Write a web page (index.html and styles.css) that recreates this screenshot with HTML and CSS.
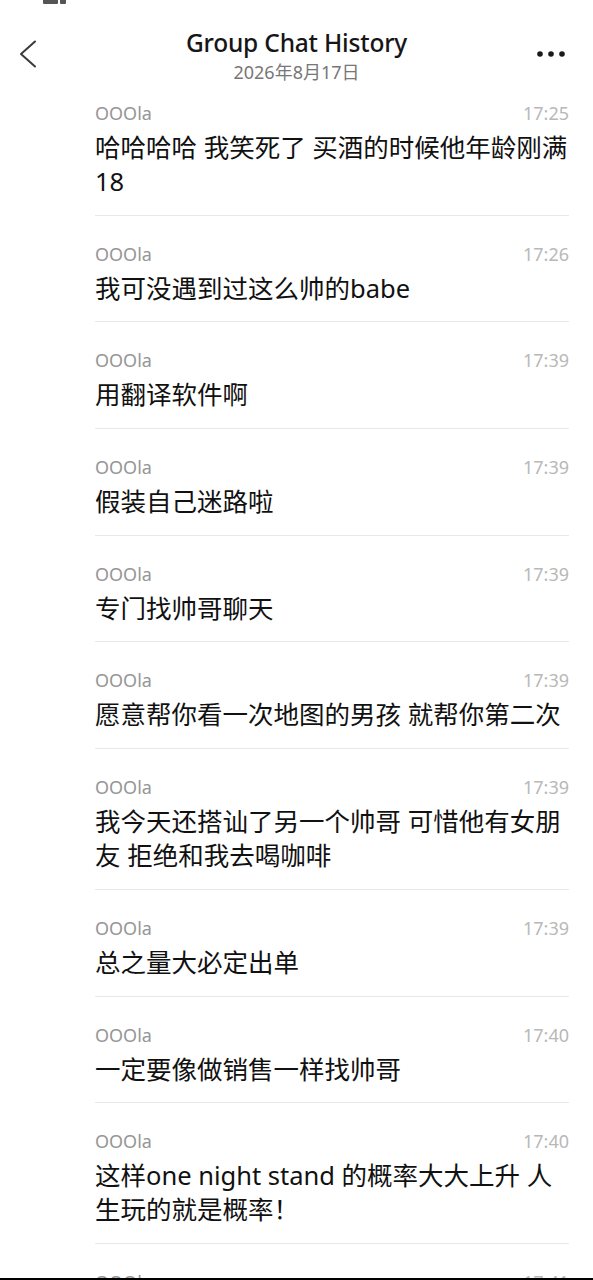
FILE: index.html
```html
<!DOCTYPE html>
<html lang="zh-CN">
<head>
    <meta charset="UTF-8">
    <meta name="viewport" content="width=device-width, initial-scale=1.0">
    <title>Group Chat History</title>
    <link rel="stylesheet" href="styles.css">
</head>
<body>
    <div class="status-icon"><span></span><span></span></div>

    <div class="header">
        <div class="back-btn">
            <svg width="18" height="28" viewBox="0 0 18 28">
                <polyline points="16,1.5 2,14 16,26.5" fill="none" stroke="#3a3a3a" stroke-width="2" stroke-linecap="round" stroke-linejoin="round"/>
            </svg>
        </div>
        <div class="title-box">
            <h1>Group Chat History</h1>
            <p class="date">2026年8月17日</p>
        </div>
        <div class="more-btn">
            <svg width="28" height="6" viewBox="0 0 28 6">
                <circle cx="3" cy="3" r="2.8" fill="#1a1a1a"/>
                <circle cx="14" cy="3" r="2.8" fill="#1a1a1a"/>
                <circle cx="25" cy="3" r="2.8" fill="#1a1a1a"/>
            </svg>
        </div>
    </div>

    <div class="chat-list">
        <div class="chat-item">
            <div class="meta"><span class="name">OOOla</span><span class="time">17:25</span></div>
            <p class="msg">哈哈哈哈 我笑死了 买酒的时候他年龄刚满18</p>
        </div>
        <div class="chat-item">
            <div class="meta"><span class="name">OOOla</span><span class="time">17:26</span></div>
            <p class="msg">我可没遇到过这么帅的babe</p>
        </div>
        <div class="chat-item">
            <div class="meta"><span class="name">OOOla</span><span class="time">17:39</span></div>
            <p class="msg">用翻译软件啊</p>
        </div>
        <div class="chat-item">
            <div class="meta"><span class="name">OOOla</span><span class="time">17:39</span></div>
            <p class="msg">假装自己迷路啦</p>
        </div>
        <div class="chat-item">
            <div class="meta"><span class="name">OOOla</span><span class="time">17:39</span></div>
            <p class="msg">专门找帅哥聊天</p>
        </div>
        <div class="chat-item">
            <div class="meta"><span class="name">OOOla</span><span class="time">17:39</span></div>
            <p class="msg">愿意帮你看一次地图的男孩 就帮你第二次</p>
        </div>
        <div class="chat-item">
            <div class="meta"><span class="name">OOOla</span><span class="time">17:39</span></div>
            <p class="msg">我今天还搭讪了另一个帅哥 可惜他有女朋友 拒绝和我去喝咖啡</p>
        </div>
        <div class="chat-item">
            <div class="meta"><span class="name">OOOla</span><span class="time">17:39</span></div>
            <p class="msg">总之量大必定出单</p>
        </div>
        <div class="chat-item">
            <div class="meta"><span class="name">OOOla</span><span class="time">17:40</span></div>
            <p class="msg">一定要像做销售一样找帅哥</p>
        </div>
        <div class="chat-item">
            <div class="meta"><span class="name">OOOla</span><span class="time">17:40</span></div>
            <p class="msg">这样one night stand 的概率大大上升 人生玩的就是概率！</p>
        </div>
        <div class="chat-item">
            <div class="meta"><span class="name">OOOla</span><span class="time">17:41</span></div>
            <p class="msg">&nbsp;</p>
        </div>
    </div>

    <div class="bottom-bar"></div>
</body>
</html>
```

FILE: styles.css
```css
body {
    margin: 0;
    background: #fff;
    font-family: "Noto Sans", "Noto Sans CJK SC", sans-serif;
    color: #111;
    height: 1280px;
    overflow: hidden;
}

/* top status bar leftover */
.status-icon {
    position: absolute;
    top: 0;
    left: 43px;
    display: flex;
    gap: 2px;
}
.status-icon span {
    display: block;
    width: 15px;
    height: 4px;
    background: #555;
    border-radius: 0 0 1px 1px;
}
.status-icon span + span {
    width: 6px;
}

.header {
    display: grid;
    grid-template-columns: 90px 1fr 90px;
    padding-top: 28px;
    height: 56px;
}
.back-btn {
    margin-left: 19px;
    margin-top: 12px;
}
.back-btn svg, .more-btn svg {
    display: block;
}
.title-box {
    text-align: center;
}
.title-box h1 {
    margin: 0;
    font-size: 24.5px;
    line-height: 30px;
    font-weight: 500;
    color: #161616;
    letter-spacing: -0.2px;
}
.title-box .date {
    margin: 4px 0 0;
    font-size: 18px;
    line-height: 20px;
    color: #777;
}
.more-btn {
    justify-self: end;
    margin-right: 28px;
    margin-top: 23px;
}

.chat-list {
    padding: 0 24px 0 95px;
}
.chat-item {
    padding: 26px 0 16.7px;
    border-bottom: 1px solid #e8e8e8;
}
.chat-item:first-child {
    padding-top: 17px;
}
.meta {
    display: flex;
    justify-content: space-between;
    font-size: 18px;
    line-height: 24px;
}
.name {
    color: #969696;
}
.time {
    color: #b8b8b8;
}
.msg {
    margin: 5px 0 0;
    font-size: 25.5px;
    line-height: 34px;
    color: #111;
}

.bottom-bar {
    position: fixed;
    left: 0;
    right: 0;
    bottom: 0;
    height: 2px;
    background: #000;
}
```
